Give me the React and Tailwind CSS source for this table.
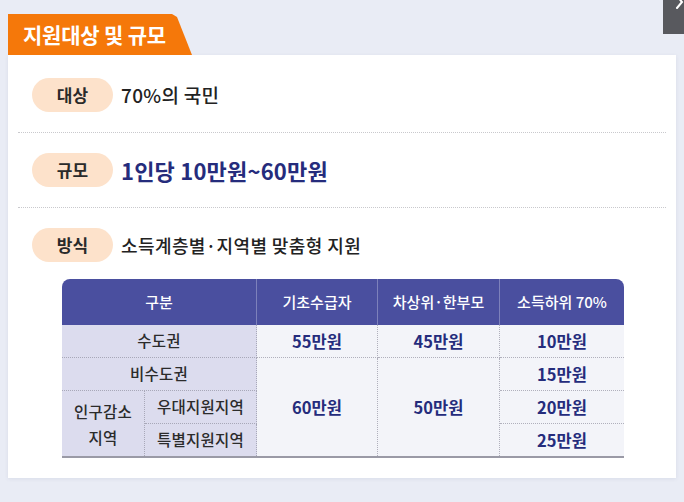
const FONT = "font-['Noto_Sans_CJK_KR','Noto_Sans',sans-serif]";

const rows = [
  { label: "대상", content: <span className="text-[19px] font-medium text-[#222] tracking-[0.3px]">70%의 국민</span> },
  { label: "규모", content: <span className="text-[22px] font-bold text-[#252c7c] tracking-[0.2px]">1인당 10만원~60만원</span> },
];

const Pill = ({ children }) => (
  <div className="w-[81px] h-[34px] rounded-full bg-[#fde2cb] flex items-center justify-center text-[17px] font-bold text-[#2a2a2a]">
    {children}
  </div>
);

const head = "flex items-center justify-center text-white text-[15px] font-medium bg-[#4a4f9f]";
const lab = "flex items-center justify-center bg-[#dcdcee] text-[15.5px] font-medium text-[#2b2b2b] border-dotted border-[#a8a8b8] tracking-[0.2px]";
const val = "flex items-center justify-center bg-[#f3f4f9] text-[16.5px] font-bold text-[#252c7c] border-dotted border-[#b0b0bc]";

const SupportTable = () => (
  <div className="ml-[44px] w-[562px] grid grid-cols-[83px_112px_121px_122px_124px] grid-rows-[46px_33px_33px_33px_32px] border-b-2 border-[#9a9aa6]">
    <div className={`${head} col-span-2 rounded-tl-[8px] border-r border-[#7d81bb]`}>구분</div>
    <div className={`${head} border-r border-[#7d81bb]`}>기초수급자</div>
    <div className={`${head} border-r border-[#7d81bb]`}>차상위·한부모</div>
    <div className={`${head} rounded-tr-[8px]`}>소득하위 70%</div>

    <div className={`${lab} col-span-2 border-r border-b`}>수도권</div>
    <div className={`${val} border-r border-b`}>55만원</div>
    <div className={`${val} border-r border-b`}>45만원</div>
    <div className={`${val} border-b`}>10만원</div>

    <div className={`${lab} col-span-2 border-r border-b`}>비수도권</div>
    <div className={`${val} row-span-3 border-r`}>60만원</div>
    <div className={`${val} row-span-3 border-r`}>50만원</div>
    <div className={`${val} border-b`}>15만원</div>

    <div className={`${lab} row-span-2 border-r text-center leading-[26px]`}>
      인구감소
      <br />
      지역
    </div>
    <div className={`${lab} border-r border-b`}>우대지원지역</div>
    <div className={`${val} border-b`}>20만원</div>

    <div className={`${lab} border-r`}>특별지원지역</div>
    <div className={val}>25만원</div>
  </div>
);

export default function App() {
  return (
    <div className={`relative w-[684px] h-[502px] bg-[#e9ecf5] pt-[14px] pl-[8px] overflow-hidden ${FONT}`}>
      <div className="absolute right-0 top-0 w-[21px] h-[34px] bg-[#58595e]">
        <svg width="21" height="34" viewBox="0 0 21 34" className="block">
          <path d="M14 -4 L19 2 L14 8" fill="none" stroke="#fff" strokeWidth="2" strokeLinecap="round" />
        </svg>
      </div>

      <div className="flex w-[184px] h-[41px] items-center pl-[15px] bg-[#f5780a] text-white text-[21px] font-bold tracking-[-0.2px] [clip-path:polygon(0_0,calc(100%-20px)_0,calc(100%-15px)_3px,100%_100%,0_100%)]">
        지원대상 및 규모
      </div>

      <div className="w-[668px] h-[423px] bg-white shadow-[0_1px_4px_rgba(40,50,90,0.08)] px-[10px]">
        {rows.map((r, i) => (
          <div
            key={r.label}
            className={`flex items-center gap-[8px] pl-[14px] border-b border-dotted border-[#c9c9cd] ${i === 0 ? "pt-[23px] pb-[20px]" : "pt-[20px] pb-[20px]"}`}
          >
            <Pill>{r.label}</Pill>
            {r.content}
          </div>
        ))}
        <div className="pt-[20px]">
          <div className="flex items-center gap-[8px] pl-[14px]">
            <Pill>방식</Pill>
            <span className="text-[18px] font-medium text-[#222] tracking-[0.4px]">소득계층별·지역별 맞춤형 지원</span>
          </div>
          <div className="mt-[17px]">
            <SupportTable />
          </div>
        </div>
      </div>
    </div>
  );
}
